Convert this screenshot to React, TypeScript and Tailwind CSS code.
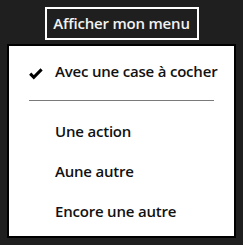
import React from "react";

const font = { fontFamily: '"Open Sans", "Noto Sans", sans-serif' };

function Check() {
  return (
    <svg width="14" height="12" viewBox="0 0 14 12" className="absolute left-[20px] top-[17px]">
      <path d="M1.2 5.6 L4.8 9.4 L12.6 1.4" fill="none" stroke="#000" strokeWidth="3" strokeLinecap="butt" strokeLinejoin="miter" />
    </svg>
  );
}

function Item({ children, checked }: { children: React.ReactNode; checked?: boolean }) {
  return (
    <div className="relative flex h-10 items-center pl-[46px] text-[15px] font-semibold tracking-[-0.2px] text-[#111]">
      {checked && <Check />}
      <span>{children}</span>
    </div>
  );
}

export default function App() {
  return (
    <div className="flex h-[245px] w-[243px] flex-col items-center bg-[#1f1f1f]" style={font}>
      <button className="mt-[7px] flex h-[33px] w-[154px] items-center justify-center border-2 border-white bg-[#1f1f1f] text-[15px] font-semibold tracking-[-0.2px] text-[#f2f2f2]">
        Afficher mon menu
      </button>
      <div className="mt-[4px] w-[229px] border-2 border-black bg-white py-[5px]">
        <Item checked>Avec une case à cocher</Item>
        <div className="h-[20px] pt-[9px] pl-[20px] pr-[20px]">
          <div className="h-px bg-[#7a7a7a]" />
        </div>
        <Item>Une action</Item>
        <Item>Aune autre</Item>
        <Item>Encore une autre</Item>
      </div>
    </div>
  );
}
